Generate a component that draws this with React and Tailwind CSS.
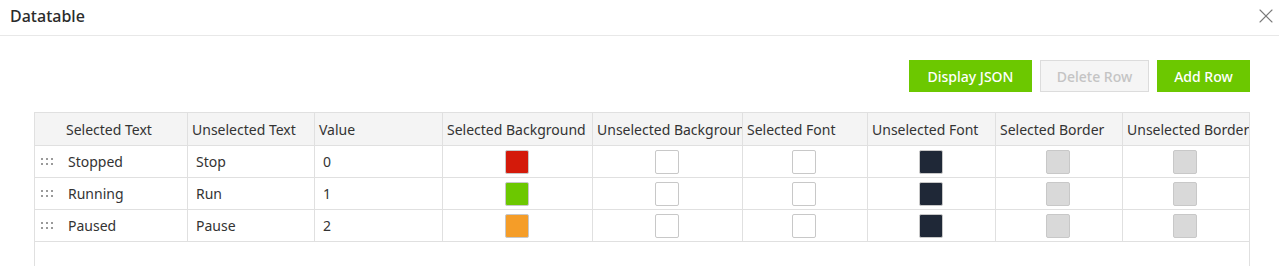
import React from 'react';
import { X } from 'lucide-react';

const columns = [
  { label: 'Selected Text', w: 'w-[153px]', pad: 'pl-[31px]' },
  { label: 'Unselected Text', w: 'w-[127px]', pad: 'pl-[4px]' },
  { label: 'Value', w: 'w-[128px]', pad: 'pl-[4px]' },
  { label: 'Selected Background', w: 'w-[150px]', pad: 'pl-[4px]' },
  { label: 'Unselected Background', w: 'w-[150px]', pad: 'pl-[4px]' },
  { label: 'Selected Font', w: 'w-[125px]', pad: 'pl-[4px]' },
  { label: 'Unselected Font', w: 'w-[128px]', pad: 'pl-[4px]' },
  { label: 'Selected Border', w: 'w-[127px]', pad: 'pl-[4px]' },
  { label: 'Unselected Border', w: 'w-[126px]', pad: 'pl-[4px]' },
];

const rows = [
  { sel: 'Stopped', unsel: 'Stop', value: '0', bg: 'bg-[#d41a0a]' },
  { sel: 'Running', unsel: 'Run', value: '1', bg: 'bg-[#6cc800]' },
  { sel: 'Paused', unsel: 'Pause', value: '2', bg: 'bg-[#f59d28]' },
];

const Swatch = ({ color }) => (
  <div className={`w-[24px] h-[24px] border border-[#c8c8c8] rounded-[2px] ${color}`} />
);

const DragHandle = () => (
  <div className="grid grid-cols-3 gap-x-[3px] gap-y-[3px] w-[12px]">
    {[0, 1, 2, 3, 4, 5].map(i => (
      <span key={i} className="w-[2px] h-[2px] bg-[#9a9a9a]" />
    ))}
  </div>
);

export default function App() {
  return (
    <div className="w-[1279px] h-[266px] bg-white overflow-hidden text-[#333] font-['Noto_Sans',sans-serif]">
      {/* Header */}
      <div className="h-[36px] border-b border-[#e8e8e8] flex items-center justify-between pl-[10px] pr-[1px]">
        <h2 className="text-[16px] font-medium text-[#2b2b2b] leading-none -mt-[3px]">Datatable</h2>
        <X size={24} strokeWidth={1.1} className="text-[#7a7a7a] -mt-[4px]" />
      </div>

      {/* Toolbar */}
      <div className="flex justify-end gap-[8px] pr-[29px] pt-[24px]">
        <button className="w-[123px] h-[32px] bg-[#6cc800] text-white text-[14px] font-medium">Display JSON</button>
        <button className="w-[109px] h-[32px] bg-[#f5f5f5] border border-[#dcdcdc] text-[#c4c4c4] text-[14px] font-medium">Delete Row</button>
        <button className="w-[93px] h-[32px] bg-[#6cc800] text-white text-[14px] font-medium">Add Row</button>
      </div>

      {/* Table */}
      <div className="ml-[34px] mt-[20px] w-[1216px] h-[170px] border border-[#e0e0e0] text-[14px]">
        <div className="flex bg-[#f4f4f4] border-b border-[#e0e0e0] h-[33px]">
          {columns.map((c, i) => (
            <div
              key={c.label}
              className={`${c.w} ${c.pad} shrink-0 flex items-center whitespace-nowrap overflow-hidden ${i < columns.length - 1 ? 'border-r border-[#e0e0e0]' : ''}`}
            >
              {c.label}
            </div>
          ))}
        </div>

        {rows.map(r => (
          <div key={r.sel} className="flex border-b border-[#e0e0e0] h-[32px]">
            <div className="w-[153px] shrink-0 border-r border-[#e0e0e0] flex items-center pl-[6px]">
              <DragHandle />
              <span className="ml-[15px]">{r.sel}</span>
            </div>
            <div className="w-[127px] shrink-0 border-r border-[#e0e0e0] flex items-center pl-[8px]">{r.unsel}</div>
            <div className="w-[128px] shrink-0 border-r border-[#e0e0e0] flex items-center pl-[8px]">{r.value}</div>
            <div className="w-[150px] shrink-0 border-r border-[#e0e0e0] flex items-center justify-center pr-[2px]">
              <Swatch color={r.bg} />
            </div>
            <div className="w-[150px] shrink-0 border-r border-[#e0e0e0] flex items-center justify-center pr-[2px]">
              <Swatch color="bg-white" />
            </div>
            <div className="w-[125px] shrink-0 border-r border-[#e0e0e0] flex items-center justify-center pr-[2px]">
              <Swatch color="bg-white" />
            </div>
            <div className="w-[128px] shrink-0 border-r border-[#e0e0e0] flex items-center justify-center pr-[2px]">
              <Swatch color="bg-[#1f2837]" />
            </div>
            <div className="w-[127px] shrink-0 border-r border-[#e0e0e0] flex items-center justify-center pr-[2px]">
              <Swatch color="bg-[#d9d9d9]" />
            </div>
            <div className="w-[126px] shrink-0 flex items-center justify-center pr-[2px]">
              <Swatch color="bg-[#d9d9d9]" />
            </div>
          </div>
        ))}
      </div>
    </div>
  );
}
